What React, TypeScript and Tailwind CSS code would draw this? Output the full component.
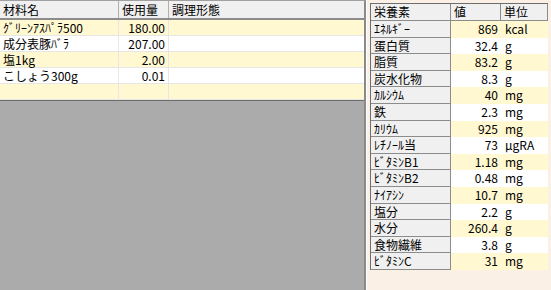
import React from "react"

const font = { fontFamily: '"MS UI Gothic", "Noto Sans CJK JP", sans-serif' }

const ingredients = [
  { name: "ｸﾞﾘｰﾝｱｽﾊﾟﾗ500", qty: "180.00" },
  { name: "成分表豚ﾊﾞﾗ", qty: "207.00" },
  { name: "塩1kg", qty: "2.00" },
  { name: "こしょう300g", qty: "0.01" },
  { name: "", qty: "" },
]

const nutrients = [
  ["ｴﾈﾙｷﾞｰ", "869", "kcal"],
  ["蛋白質", "32.4", "g"],
  ["脂質", "83.2", "g"],
  ["炭水化物", "8.3", "g"],
  ["ｶﾙｼｳﾑ", "40", "mg"],
  ["鉄", "2.3", "mg"],
  ["ｶﾘｳﾑ", "925", "mg"],
  ["ﾚﾁﾉｰﾙ当", "73", "μgRA"],
  ["ﾋﾞﾀﾐﾝB1", "1.18", "mg"],
  ["ﾋﾞﾀﾐﾝB2", "0.48", "mg"],
  ["ﾅｲｱｼﾝ", "10.7", "mg"],
  ["塩分", "2.2", "g"],
  ["水分", "260.4", "g"],
  ["食物繊維", "3.8", "g"],
  ["ﾋﾞﾀﾐﾝC", "31", "mg"],
]

function IngredientGrid() {
  return (
    <div className="flex h-full w-[366px] flex-col border-t border-[#a0a0a0] border-r-2 border-r-[#8a8a8a] bg-[#ababab]">
      {/* header */}
      <div className="flex h-[19px] shrink-0 border-b-2 border-[#8c8c8c] bg-[#f0f0f0] text-[12px] leading-[17px] text-black">
        <div className="w-[119px] border-r border-[#b0b0b0] pl-[3px]">材料名</div>
        <div className="w-[50px] border-r border-[#b0b0b0] pl-[3px]">使用量</div>
        <div className="flex-1 pl-[3px]">調理形態</div>
      </div>
      {ingredients.map((r, i) => (
        <div
          key={i}
          className={`flex h-[16px] shrink-0 border-b border-[#e6e6e6] text-[12px] leading-[15px] text-black ${i % 2 === 0 ? "bg-[#fff8d0]" : "bg-white"}`}
        >
          <div className="w-[119px] border-r border-[#e6e6e6] pl-[3px]">{r.name}</div>
          <div className="w-[50px] border-r border-[#e6e6e6] pr-[3px] text-right">{r.qty}</div>
          <div className="flex-1" />
        </div>
      ))}
      <div className="h-[1px] shrink-0 bg-[#6e6e6e]" />
    </div>
  )
}

function NutrientGrid() {
  return (
    <div className="mt-[3px] ml-[3px] flex w-[178px] flex-col self-start border-l border-t border-[#6e6e6e] text-[12px] text-black">
      <div className="flex h-[17px] border-b border-[#8c8c8c] bg-[#f0f0f0] leading-[16px]">
        <div className="w-[80px] border-r border-[#8c8c8c] pl-[3px]">栄養素</div>
        <div className="w-[50px] border-r border-[#8c8c8c] pl-[3px]">値</div>
        <div className="w-[47px] border-r border-[#8c8c8c] pl-[3px]">単位</div>
      </div>
      {nutrients.map(([label, value, unit], i) => (
        <div key={label} className="flex h-[16.6px] leading-[15px]">
          <div className="w-[80px] border-r border-b border-[#8c8c8c] bg-[#f0f0f0] pl-[3px]">{label}</div>
          <div className={`flex w-[97px] ${i % 2 === 0 ? "bg-[#fff8d0]" : "bg-white"}`}>
            <div className="w-[50px] pr-[3px] text-right">{value}</div>
            <div className="flex-1 pl-[4px]">{unit}</div>
          </div>
        </div>
      ))}
    </div>
  )
}

export default function App() {
  return (
    <div className="flex h-[290px] w-[551px] overflow-hidden bg-[#faf0e6]" style={font}>
      <IngredientGrid />
      <div className="w-[1px] bg-white" />
      <NutrientGrid />
    </div>
  )
}
